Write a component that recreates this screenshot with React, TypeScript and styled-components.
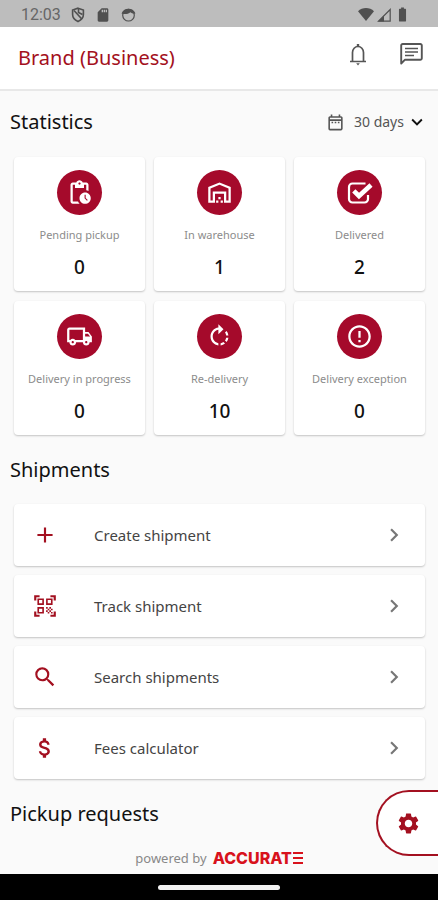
import React from 'react';
import styled, { createGlobalStyle } from 'styled-components';
import type { IconType } from 'react-icons';
import {
  MdAdd,
  MdAttachMoney,
  MdBatteryFull,
  MdChevronRight,
  MdErrorOutline,
  MdKeyboardArrowDown,
  MdOutlineDateRange,
  MdOutlineLocalShipping,
  MdOutlineWarehouse,
  MdPendingActions,
  MdQrCodeScanner,
  MdRotateRight,
  MdSdCard,
  MdSearch,
  MdSettings,
} from 'react-icons/md';

const crimson = '#a50a2b';
const darkRed = '#a31020';

const GlobalStyle = createGlobalStyle`
  * { box-sizing: border-box; }
  body {
    margin: 0;
    background: #fafafa;
    color: #111;
    font-family: "Noto Sans", "Open Sans", sans-serif;
  }
  button, select { font: inherit; color: inherit; }
  h1, h2, p, ul, dl, dd { margin: 0; padding: 0; }
  svg { display: block; flex: none; }
`;

const Screen = styled.div`
  min-height: 100vh;
  display: flex;
  flex-direction: column;
`;

const StatusBar = styled.div`
  height: 27px;
  padding: 2px 27px 0 21px;
  display: flex;
  align-items: center;
  justify-content: space-between;
  background: #bdbdbd;
  color: #505050;
`;

const StatusGroup = styled.div<{ $gap: number }>`
  display: flex;
  align-items: center;
  gap: ${(p) => p.$gap}px;
`;

const Clock = styled.span`
  font-family: Roboto, sans-serif;
  font-size: 16px;
  line-height: 20px;
  color: #666;
`;

const Header = styled.header`
  height: 64px;
  padding: 0 15px 0 18px;
  display: flex;
  align-items: center;
  justify-content: space-between;
  background: #fff;
  border-bottom: 2px solid #e8e8e8;
`;

const BrandName = styled.h1`
  font-size: 20px;
  line-height: 28px;
  font-weight: 400;
  color: ${darkRed};
`;

const HeaderActions = styled.div`
  display: flex;
  gap: 33px;
  padding-bottom: 8px;
`;

const IconButton = styled.button`
  display: flex;
  align-items: center;
  justify-content: center;
  padding: 0;
  border: 0;
  background: none;
  color: #555;
`;

const Main = styled.main`
  flex: 1;
  display: flex;
  flex-direction: column;
`;

const SectionHead = styled.div<{ $compact?: boolean }>`
  min-height: ${(p) => (p.$compact ? 62 : 69)}px;
  padding: 0 10px;
  display: flex;
  align-items: center;
  justify-content: space-between;
`;

const SectionTitle = styled.h2`
  font-size: 20px;
  line-height: 28px;
  font-weight: 400;
`;

const Period = styled.label`
  display: flex;
  align-items: center;
  color: #555;
  font-size: 14px;
`;

const PeriodSelect = styled.select`
  appearance: none;
  border: 0;
  background: none;
  margin: 0 2px 0 9px;
  padding: 0;
  line-height: 20px;
`;

const StatGrid = styled.dl`
  margin: 4px 13px 0 14px;
  display: grid;
  grid-template-columns: repeat(3, 1fr);
  gap: 10px 9px;
`;

const StatCard = styled.div`
  padding: 13px 0 11px;
  display: flex;
  flex-direction: column;
  align-items: center;
  background: #fff;
  border-radius: 4px;
  box-shadow: 0 1px 2px rgba(0, 0, 0, 0.22);
`;

const Badge = styled.div`
  width: 45px;
  height: 45px;
  display: grid;
  place-items: center;
  border-radius: 50%;
  background: ${crimson};
  color: #fff;
`;

const StatLabel = styled.dt`
  margin-top: 10px;
  font-size: 11px;
  line-height: 20px;
  color: #8c8c8c;
  white-space: nowrap;
`;

const StatValue = styled.dd`
  margin-top: 9px;
  font-size: 19px;
  line-height: 26px;
  font-weight: 500;
`;

const ActionList = styled.ul`
  margin: 0 13px 0 14px;
  display: flex;
  flex-direction: column;
  gap: 9px;
  list-style: none;
`;

const ActionButton = styled.button`
  width: 100%;
  height: 62px;
  padding: 0 18px;
  display: flex;
  align-items: center;
  border: 0;
  border-radius: 4px;
  background: #fff;
  box-shadow: 0 1px 2px rgba(0, 0, 0, 0.22);
  text-align: left;
`;

const ActionIcon = styled.span`
  width: 62px;
  display: flex;
  color: ${darkRed};
`;

const ActionLabel = styled.span`
  flex: 1;
  font-size: 15px;
  line-height: 24px;
  color: #444;
`;

const ActionChevron = styled.span`
  color: #777;
`;

const PoweredBy = styled.p`
  margin-top: auto;
  padding: 0 0 6px;
  display: flex;
  align-items: center;
  justify-content: center;
  gap: 6px;
  font-size: 13px;
  line-height: 20px;
  color: #888;
`;

const Logo = styled.strong`
  font-family: Inter, sans-serif;
  font-size: 16px;
  line-height: 20px;
  font-weight: 800;
  color: #d8121c;
`;

/* The last letter of the wordmark is three horizontal bars. */
const BarLetter = styled.span`
  margin-left: 1px;
  color: transparent;
  background: linear-gradient(#d8121c 0 2px, transparent 2px 5px, #d8121c 5px 7px, transparent 7px 10px, #d8121c 10px 12px)
    0 4px / 100% 12px no-repeat;
`;

const SettingsTab = styled.button`
  position: fixed;
  right: 0;
  bottom: 44px;
  width: 62px;
  height: 66px;
  padding: 0;
  display: grid;
  place-items: center;
  border: 2px solid ${darkRed};
  border-right: 0;
  border-radius: 33px 0 0 33px;
  background: #fff;
  color: ${darkRed};
`;

const NavBar = styled.div`
  height: 26px;
  display: grid;
  place-items: center;
  background: #000;
`;

const HomeHandle = styled.div`
  width: 28%;
  height: 5px;
  border-radius: 3px;
  background: #f2f2f2;
`;

const ShieldIcon = () => (
  <svg width="14" height="16" viewBox="0 0 14 16" fill="none" stroke="currentColor" strokeWidth="1.6">
    <path d="M7 1.2 12.4 3v4.6c0 3.2-2.2 5.6-5.4 7-3.2-1.4-5.4-3.8-5.4-7V3z" />
    <path d="M3 3.5 10.8 12M7.5 2v3.5l4 2" />
  </svg>
);

const FaceIcon = () => (
  <svg width="15" height="14" viewBox="0 0 15 14">
    <circle cx="7.5" cy="7.2" r="5.8" fill="none" stroke="currentColor" strokeWidth="1.2" />
    <path d="M.5 5.5C2 2.2 4.5.8 7.5.8s5.5 1.4 7 4.7C12.5 6 10.5 5.3 9.5 4.2 7 6.2 3.5 6.5.5 5.5z" fill="currentColor" />
  </svg>
);

const WifiIcon = () => (
  <svg width="16" height="13" viewBox="0 0 16 13" fill="currentColor">
    <path d="M8 13 0 3.2C2.2 1.2 5 0 8 0s5.8 1.2 8 3.2z" />
  </svg>
);

const SignalIcon = () => (
  <svg width="14" height="14" viewBox="0 0 14 14">
    <path d="M1.5 13.2 13.2 1.5v11.7z" fill="none" stroke="currentColor" strokeWidth="1.2" />
    <path d="M1 13.5 7 7.5v6z" fill="currentColor" />
  </svg>
);

const BellIcon = () => (
  <svg width="18" height="23" viewBox="0 0 18 23" fill="none" stroke="currentColor" strokeWidth="1.7">
    <path d="M3.5 18.5V9.5a5.5 6 0 0 1 11 0v9M1 18.5h16" />
    <path d="M9 1v2.5" strokeWidth="2.4" />
    <path d="M7.2 20.2h3.6L9 22.4z" fill="currentColor" stroke="none" />
  </svg>
);

const ChatIcon = () => (
  <svg width="23" height="22" viewBox="0 0 23 22" fill="none" stroke="currentColor" strokeWidth="1.9">
    <path d="M1.2 20.5V2.5A1.5 1.5 0 0 1 2.7 1h17.6a1.5 1.5 0 0 1 1.5 1.5v12.8a1.5 1.5 0 0 1-1.5 1.5H4.8z" strokeLinejoin="round" />
    <path d="M5 5.5h13M5 9h13M5 12.5h9" strokeWidth="1.5" />
  </svg>
);

const CheckBoxIcon: IconType = () => (
  <svg width="26" height="24" viewBox="0 0 26 24" fill="none" stroke="currentColor">
    <path d="M18.5 2.5H5.5A3.5 3.5 0 0 0 2 6v12a3.5 3.5 0 0 0 3.5 3.5h12A3.5 3.5 0 0 0 21 18v-4" strokeWidth="2.2" />
    <path d="m6.8 9.8 5.2 5.2L24 4" strokeWidth="4.6" />
  </svg>
);

const stats: { label: string; value: number; icon: IconType }[] = [
  { label: 'Pending pickup', value: 0, icon: MdPendingActions },
  { label: 'In warehouse', value: 1, icon: MdOutlineWarehouse },
  { label: 'Delivered', value: 2, icon: CheckBoxIcon },
  { label: 'Delivery in progress', value: 0, icon: MdOutlineLocalShipping },
  { label: 'Re-delivery', value: 10, icon: MdRotateRight },
  { label: 'Delivery exception', value: 0, icon: MdErrorOutline },
];

const actions: { label: string; icon: IconType }[] = [
  { label: 'Create shipment', icon: MdAdd },
  { label: 'Track shipment', icon: MdQrCodeScanner },
  { label: 'Search shipments', icon: MdSearch },
  { label: 'Fees calculator', icon: MdAttachMoney },
];

export default function App() {
  return (
    <>
      <GlobalStyle />
      <Screen>
        <StatusBar>
          <StatusGroup $gap={10}>
            <Clock>12:03</Clock>
            <ShieldIcon />
            <MdSdCard size={16} />
            <FaceIcon />
          </StatusGroup>
          <StatusGroup $gap={3}>
            <WifiIcon />
            <SignalIcon />
            <MdBatteryFull size={17} />
          </StatusGroup>
        </StatusBar>

        <Header>
          <BrandName>Brand (Business)</BrandName>
          <HeaderActions>
            <IconButton aria-label="Notifications">
              <BellIcon />
            </IconButton>
            <IconButton aria-label="Messages">
              <ChatIcon />
            </IconButton>
          </HeaderActions>
        </Header>

        <Main>
          <SectionHead $compact>
            <SectionTitle>Statistics</SectionTitle>
            <Period>
              <MdOutlineDateRange size={19} />
              <PeriodSelect aria-label="Period" defaultValue="30">
                <option value="30">30 days</option>
              </PeriodSelect>
              <MdKeyboardArrowDown size={22} color="#111" />
            </Period>
          </SectionHead>

          <StatGrid>
            {stats.map(({ label, value, icon: Icon }) => (
              <StatCard key={label}>
                <Badge>
                  <Icon size={27} />
                </Badge>
                <StatLabel>{label}</StatLabel>
                <StatValue>{value}</StatValue>
              </StatCard>
            ))}
          </StatGrid>

          <SectionHead>
            <SectionTitle>Shipments</SectionTitle>
          </SectionHead>

          <ActionList>
            {actions.map(({ label, icon: Icon }) => (
              <li key={label}>
                <ActionButton>
                  <ActionIcon>
                    <Icon size={26} />
                  </ActionIcon>
                  <ActionLabel>{label}</ActionLabel>
                  <ActionChevron>
                    <MdChevronRight size={26} />
                  </ActionChevron>
                </ActionButton>
              </li>
            ))}
          </ActionList>

          <SectionHead>
            <SectionTitle>Pickup requests</SectionTitle>
          </SectionHead>

          <PoweredBy>
            powered by
            <Logo>
              ACCURAT<BarLetter>E</BarLetter>
            </Logo>
          </PoweredBy>
        </Main>

        <NavBar>
          <HomeHandle />
        </NavBar>

        <SettingsTab aria-label="Settings">
          <MdSettings size={25} />
        </SettingsTab>
      </Screen>
    </>
  );
}
